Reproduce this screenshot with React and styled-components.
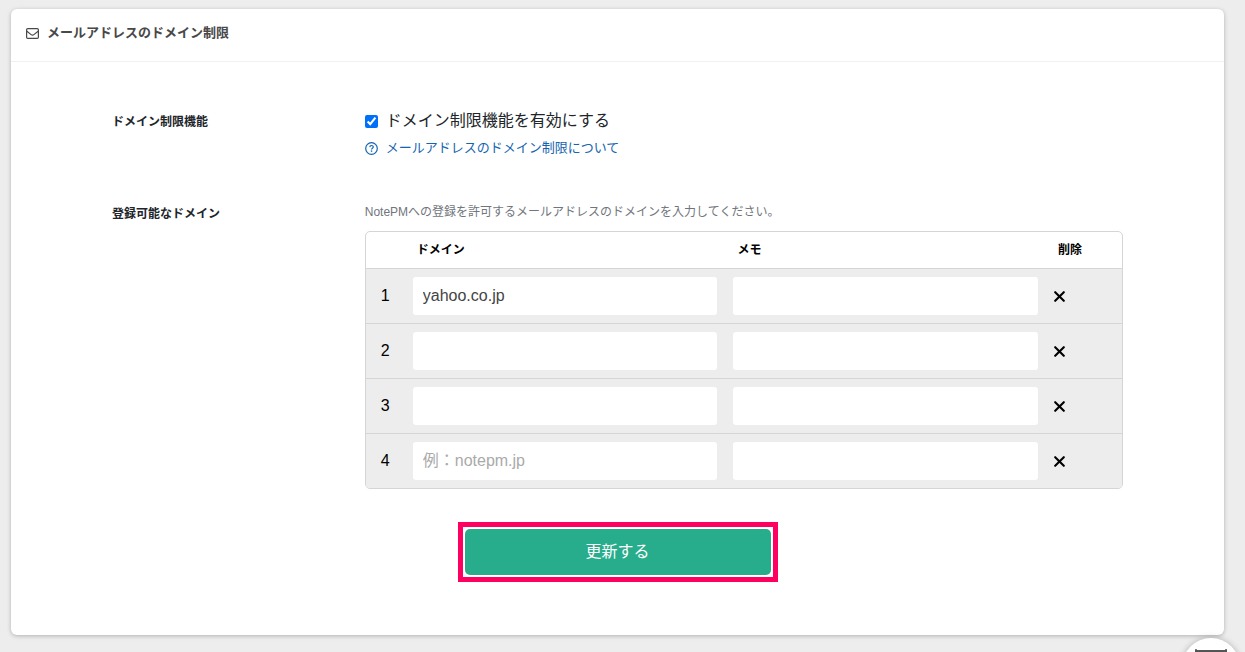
import React from 'react';
import { useState } from 'react';
import styled, { createGlobalStyle } from 'styled-components';

const GlobalStyle = createGlobalStyle`
  * {
    box-sizing: border-box;
  }

  body {
    margin: 0;
    background: #ededed;
    color: #212529;
    font-family: "Liberation Sans", "Noto Sans CJK JP", sans-serif;
    font-size: 16px;
  }

  input, button {
    font-family: inherit;
  }
`;

const Page = styled.main`
  padding: 9px 21px 17px 11px;
`;

const Card = styled.section`
  background: white;
  border-radius: 6px;
  box-shadow: 0 1px 4px rgba(0, 0, 0, 0.25);
`;

const CardHeader = styled.header`
  display: flex;
  align-items: center;
  gap: 8px;
  padding: 14px 15px 18px;
  border-bottom: 1px solid #f0f0f0;
  color: #484848;

  h1 {
    margin: 0;
    font-size: 13px;
    line-height: 20px;
  }
`;

const Form = styled.form`
  padding: 48px 101px 53px;
`;

const FormRow = styled.div`
  display: grid;
  grid-template-columns: 1fr 3fr;
  margin-bottom: ${props => props.$gap}px;
`;

const RowLabel = styled.div`
  padding-top: 1px;
  font-size: 12px;
  font-weight: bold;
  line-height: 22px;
`;

const CheckLabel = styled.label`
  display: flex;
  align-items: center;
  gap: 8px;
  line-height: 22px;

  input {
    width: 13px;
    height: 13px;
    margin: 0;
    accent-color: #0070f8;
  }
`;

const HelpLink = styled.a`
  display: flex;
  width: fit-content;
  align-items: center;
  gap: 8px;
  margin-top: 6px;
  color: #1464af;
  font-size: 13px;
  line-height: 20px;
  text-decoration: none;
`;

const HelpText = styled.p`
  margin: 0 0 9px;
  color: #71757c;
  font-size: 12px;
  line-height: 20px;
`;

const TableFrame = styled.div`
  border: 1px solid #d5d5d5;
  border-radius: 5px;
  overflow: hidden;
`;

const DomainTable = styled.table`
  width: 100%;
  table-layout: fixed;
  border-collapse: separate;
  border-spacing: 0;
  color: black;

  th {
    height: 36px;
    padding: 0 12px;
    font-size: 12px;
    line-height: 20px;
    text-align: left;
  }

  td {
    height: 55px;
    padding: 8px;
    background: #ededed;
    border-top: 1px solid #d5d5d5;
  }
`;

const Col = styled.col`
  width: ${props => props.$width};
`;

const NumberCell = styled.td`
  text-align: center;
`;

const TextInput = styled.input`
  display: block;
  width: 100%;
  height: 38px;
  padding: 0 10px;
  border: 0;
  border-radius: 3px;
  background: white;
  color: #444;
  font-size: 16px;

  &::placeholder {
    color: #aaa;
    opacity: 1;
  }
`;

const DeleteButton = styled.button`
  display: flex;
  padding: 0;
  border: 0;
  background: none;
  color: black;
  cursor: pointer;
`;

const Highlight = styled.div`
  width: 320px;
  margin: 0 auto;
  padding: 2px;
  border: 5px solid #ff0060;
`;

const SubmitButton = styled.button`
  display: block;
  width: 100%;
  height: 46px;
  padding: 0 0 4px;
  border: 0;
  border-radius: 5px;
  background: #28ad8c;
  color: white;
  font-size: 16px;
  cursor: pointer;
`;

const FloatingButton = styled.button`
  position: fixed;
  right: 5px;
  bottom: -44px;
  width: 58px;
  height: 58px;
  padding: 0;
  border: 0;
  border-radius: 50%;
  background: white;
  box-shadow: 0 0 6px rgba(0, 0, 0, 0.25);
`;

function MailIcon() {
  return (
    <svg width="13" height="13" viewBox="0 0 13 13" fill="none" stroke="currentColor" strokeWidth="1.2" aria-hidden="true">
      <rect x="0.6" y="1.6" width="11.8" height="9.8" rx="1.2" />
      <path d="M0.9 4.2 5.1 7.6Q6.5 8.7 7.9 7.6L12.1 4.2" />
    </svg>
  )
}

function QuestionIcon() {
  return (
    <svg width="13" height="13" viewBox="0 0 13 13" fill="none" stroke="currentColor" strokeWidth="1.2" aria-hidden="true">
      <circle cx="6.5" cy="6.5" r="5.8" />
      <path d="M4.8 5.1C4.9 4 5.6 3.5 6.5 3.5 7.5 3.5 8.3 4.1 8.3 5 8.3 6.2 6.5 6.2 6.5 7.6" />
      <path d="M6.5 8.4v1.4" strokeWidth="1.4" />
    </svg>
  )
}

function CloseIcon() {
  return (
    <svg width="11" height="11" viewBox="0 0 11 11" aria-hidden="true">
      <path d="M1.2 1.2 9.8 9.8M9.8 1.2 1.2 9.8" stroke="currentColor" strokeWidth="2.1" strokeLinecap="round" />
    </svg>
  )
}

function App() {

  const [enabled, setEnabled] = useState(true);
  const [rows, setRows] = useState([
    { id: 1, domain: "yahoo.co.jp", memo: "" },
    { id: 2, domain: "", memo: "" },
    { id: 3, domain: "", memo: "" },
    { id: 4, domain: "", memo: "", placeholder: "例：notepm.jp" },
  ]);

  const updateRow = (id, key, value) => {
    setRows(rows.map((row) => row.id === id ? { ...row, [key]: value } : row));
  };

  const removeRow = (id) => {
    setRows(rows.filter((row) => row.id !== id));
  };

  return (
    <>
      <GlobalStyle />
      <Page>
        <Card>
          <CardHeader>
            <MailIcon />
            <h1>メールアドレスのドメイン制限</h1>
          </CardHeader>
          <Form onSubmit={(e) => e.preventDefault()}>
            <FormRow $gap={44}>
              <RowLabel>ドメイン制限機能</RowLabel>
              <div>
                <CheckLabel>
                  <input type="checkbox" checked={enabled} onChange={(e) => setEnabled(e.target.checked)} />
                  ドメイン制限機能を有効にする
                </CheckLabel>
                <HelpLink href="#help">
                  <QuestionIcon />
                  メールアドレスのドメイン制限について
                </HelpLink>
              </div>
            </FormRow>
            <FormRow $gap={33}>
              <RowLabel>登録可能なドメイン</RowLabel>
              <div>
                <HelpText>NotePMへの登録を許可するメールアドレスのドメインを入力してください。</HelpText>
                <TableFrame>
                  <DomainTable>
                    <colgroup>
                      <Col $width="39px" />
                      <Col $width="auto" />
                      <Col $width="auto" />
                      <Col $width="76px" />
                    </colgroup>
                    <thead>
                      <tr>
                        <th></th>
                        <th>ドメイン</th>
                        <th>メモ</th>
                        <th>削除</th>
                      </tr>
                    </thead>
                    <tbody>
                      {rows.map((row, index) =>
                        <tr key={row.id}>
                          <NumberCell>{index + 1}</NumberCell>
                          <td>
                            <TextInput
                              aria-label={`ドメイン ${index + 1}`}
                              value={row.domain}
                              placeholder={row.placeholder}
                              onChange={(e) => updateRow(row.id, "domain", e.target.value)}
                            />
                          </td>
                          <td>
                            <TextInput
                              aria-label={`メモ ${index + 1}`}
                              value={row.memo}
                              onChange={(e) => updateRow(row.id, "memo", e.target.value)}
                            />
                          </td>
                          <td>
                            <DeleteButton type="button" aria-label={`削除 ${index + 1}`} onClick={() => removeRow(row.id)}>
                              <CloseIcon />
                            </DeleteButton>
                          </td>
                        </tr>
                      )}
                    </tbody>
                  </DomainTable>
                </TableFrame>
              </div>
            </FormRow>
            <Highlight>
              <SubmitButton type="submit">更新する</SubmitButton>
            </Highlight>
          </Form>
        </Card>
      </Page>
      <FloatingButton type="button" aria-label="メニュー">
        <svg width="58" height="58" viewBox="0 0 58 58" fill="none" stroke="#555" strokeWidth="2" strokeLinecap="round" aria-hidden="true">
          <path d="M14 12v26M44 12v26M14 13h30M14 37h30" />
        </svg>
      </FloatingButton>
    </>
  )
}

export default App
